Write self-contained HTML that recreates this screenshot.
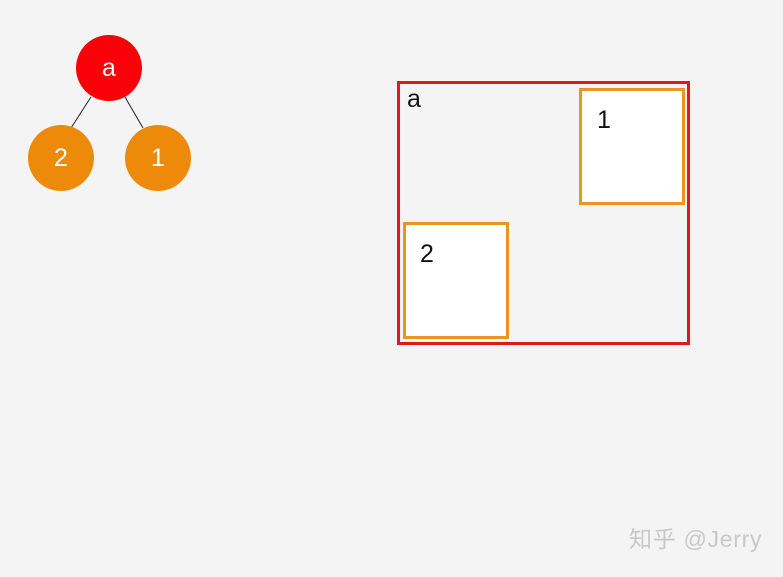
<!DOCTYPE html>
<html><head><meta charset="utf-8"><style>
html,body{margin:0;padding:0}
body{width:783px;height:577px;background:#f4f4f4;position:relative;overflow:hidden;font-family:"Liberation Sans","Noto Sans CJK SC",sans-serif}
.c{position:absolute;width:66px;height:66px;border-radius:50%;color:#fff;font-size:25px;text-align:center;line-height:67px}
.b{position:absolute;box-sizing:border-box}
.t{position:absolute;font-size:25px;color:#111;line-height:1}
</style></head><body>
<svg width="783" height="577" style="position:absolute;left:0;top:0">
<line x1="91" y1="97" x2="71" y2="128" stroke="#222" stroke-width="1"/>
<line x1="125" y1="97" x2="143" y2="128" stroke="#222" stroke-width="1"/>
</svg>
<div class="c" style="left:76px;top:35px;background:#fa0008">a</div>
<div class="c" style="left:28px;top:125px;background:#ee8a0a">2</div>
<div class="c" style="left:125px;top:125px;background:#ee8a0a">1</div>
<div class="b" style="left:397px;top:81px;width:293px;height:264px;border:3px solid #de1a1a"></div>
<div class="b" style="left:579px;top:88px;width:106px;height:117px;border:3px solid #e8961f;background:#fff"></div>
<div class="b" style="left:403px;top:222px;width:106px;height:117px;border:3px solid #e8961f;background:#fff"></div>
<div class="t" style="left:407px;top:87px">a</div>
<div class="t" style="left:597px;top:108px">1</div>
<div class="t" style="left:420px;top:242px">2</div>
<div style="position:absolute;left:629px;top:528px;font-size:23px;color:#c8c8c8;line-height:1;letter-spacing:0.7px">知乎 @Jerry</div>
</body></html>
